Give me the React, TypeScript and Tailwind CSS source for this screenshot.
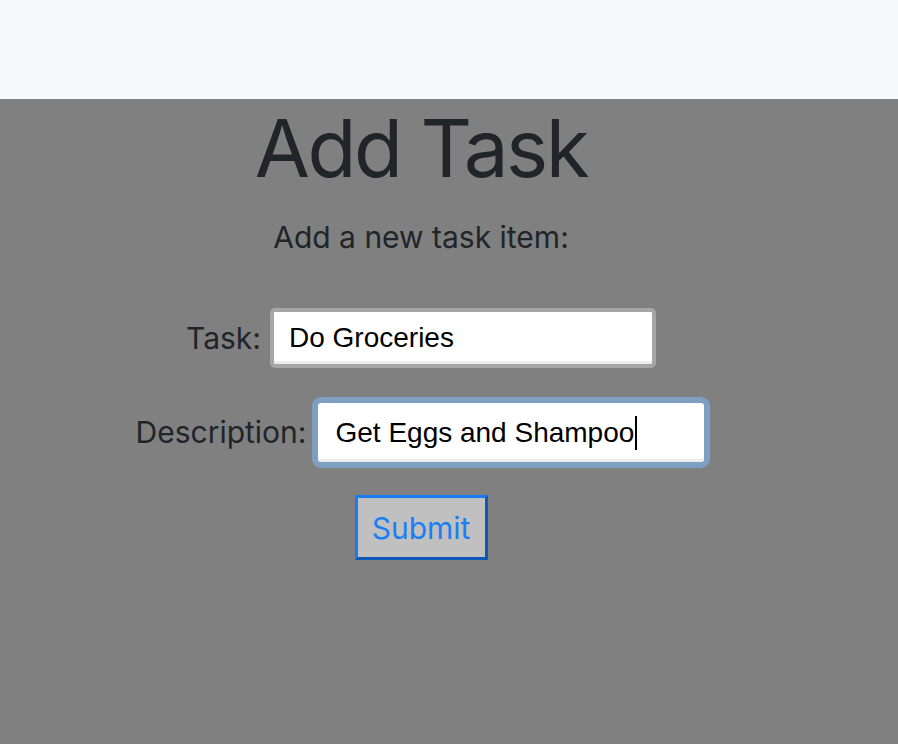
import React from "react";

export default function App() {
  return (
    <div
      className="w-[898px] h-[744px] flex flex-col bg-[#808080] overflow-hidden"
      style={{ fontFamily: "Inter, 'Liberation Sans', sans-serif" }}
    >
      <div className="h-[99px] bg-[#f8f9fa] shrink-0" />
      <div className="flex-1 flex flex-col items-center pr-[56px] text-[#212529]">
        <h1 className="text-[80px] leading-none font-normal tracking-[-2.5px] mt-[9px]">
          Add Task
        </h1>
        <p className="text-[30px] leading-none mt-[34px]">Add a new task item:</p>

        <div className="flex items-center mt-[56px]">
          <label className="text-[30px] mr-[9px]">Task:</label>
          <div className="w-[386px] h-[60px] rounded-[5px] border-[4px] border-[#a6a6a6] bg-white shadow-[inset_0_-3px_0_#ececec] flex items-center pl-[15px]">
            <span
              className="text-[28px] text-black"
              style={{ fontFamily: "'Liberation Sans', Arial, sans-serif" }}
            >
              Do Groceries
            </span>
          </div>
        </div>

        <div className="flex items-center mt-[29px] ml-[4px]">
          <label className="text-[30px] mr-[6px]">Description:</label>
          <div className="w-[398px] h-[71px] rounded-[9px] bg-[#7f9fc2] p-[6px]">
            <div className="w-full h-full rounded-[3px] bg-white shadow-[inset_0_-3px_0_#ececec] flex items-center pl-[17px]">
              <span
                className="text-[28px] text-black"
                style={{ fontFamily: "'Liberation Sans', Arial, sans-serif" }}
              >
                Get Eggs and Shampoo
              </span>
              <span className="w-[2px] h-[34px] bg-black ml-[1px]" />
            </div>
          </div>
        </div>

        <button className="mt-[27px] w-[133px] h-[65px] bg-[#c0c0c0] border-[3px] border-t-[#1a7cf5] border-l-[#1a7cf5] border-b-[#0f58b8] border-r-[#0f58b8] text-[#1a7ef5] text-[30px] leading-none">
          Submit
        </button>
      </div>
    </div>
  );
}
